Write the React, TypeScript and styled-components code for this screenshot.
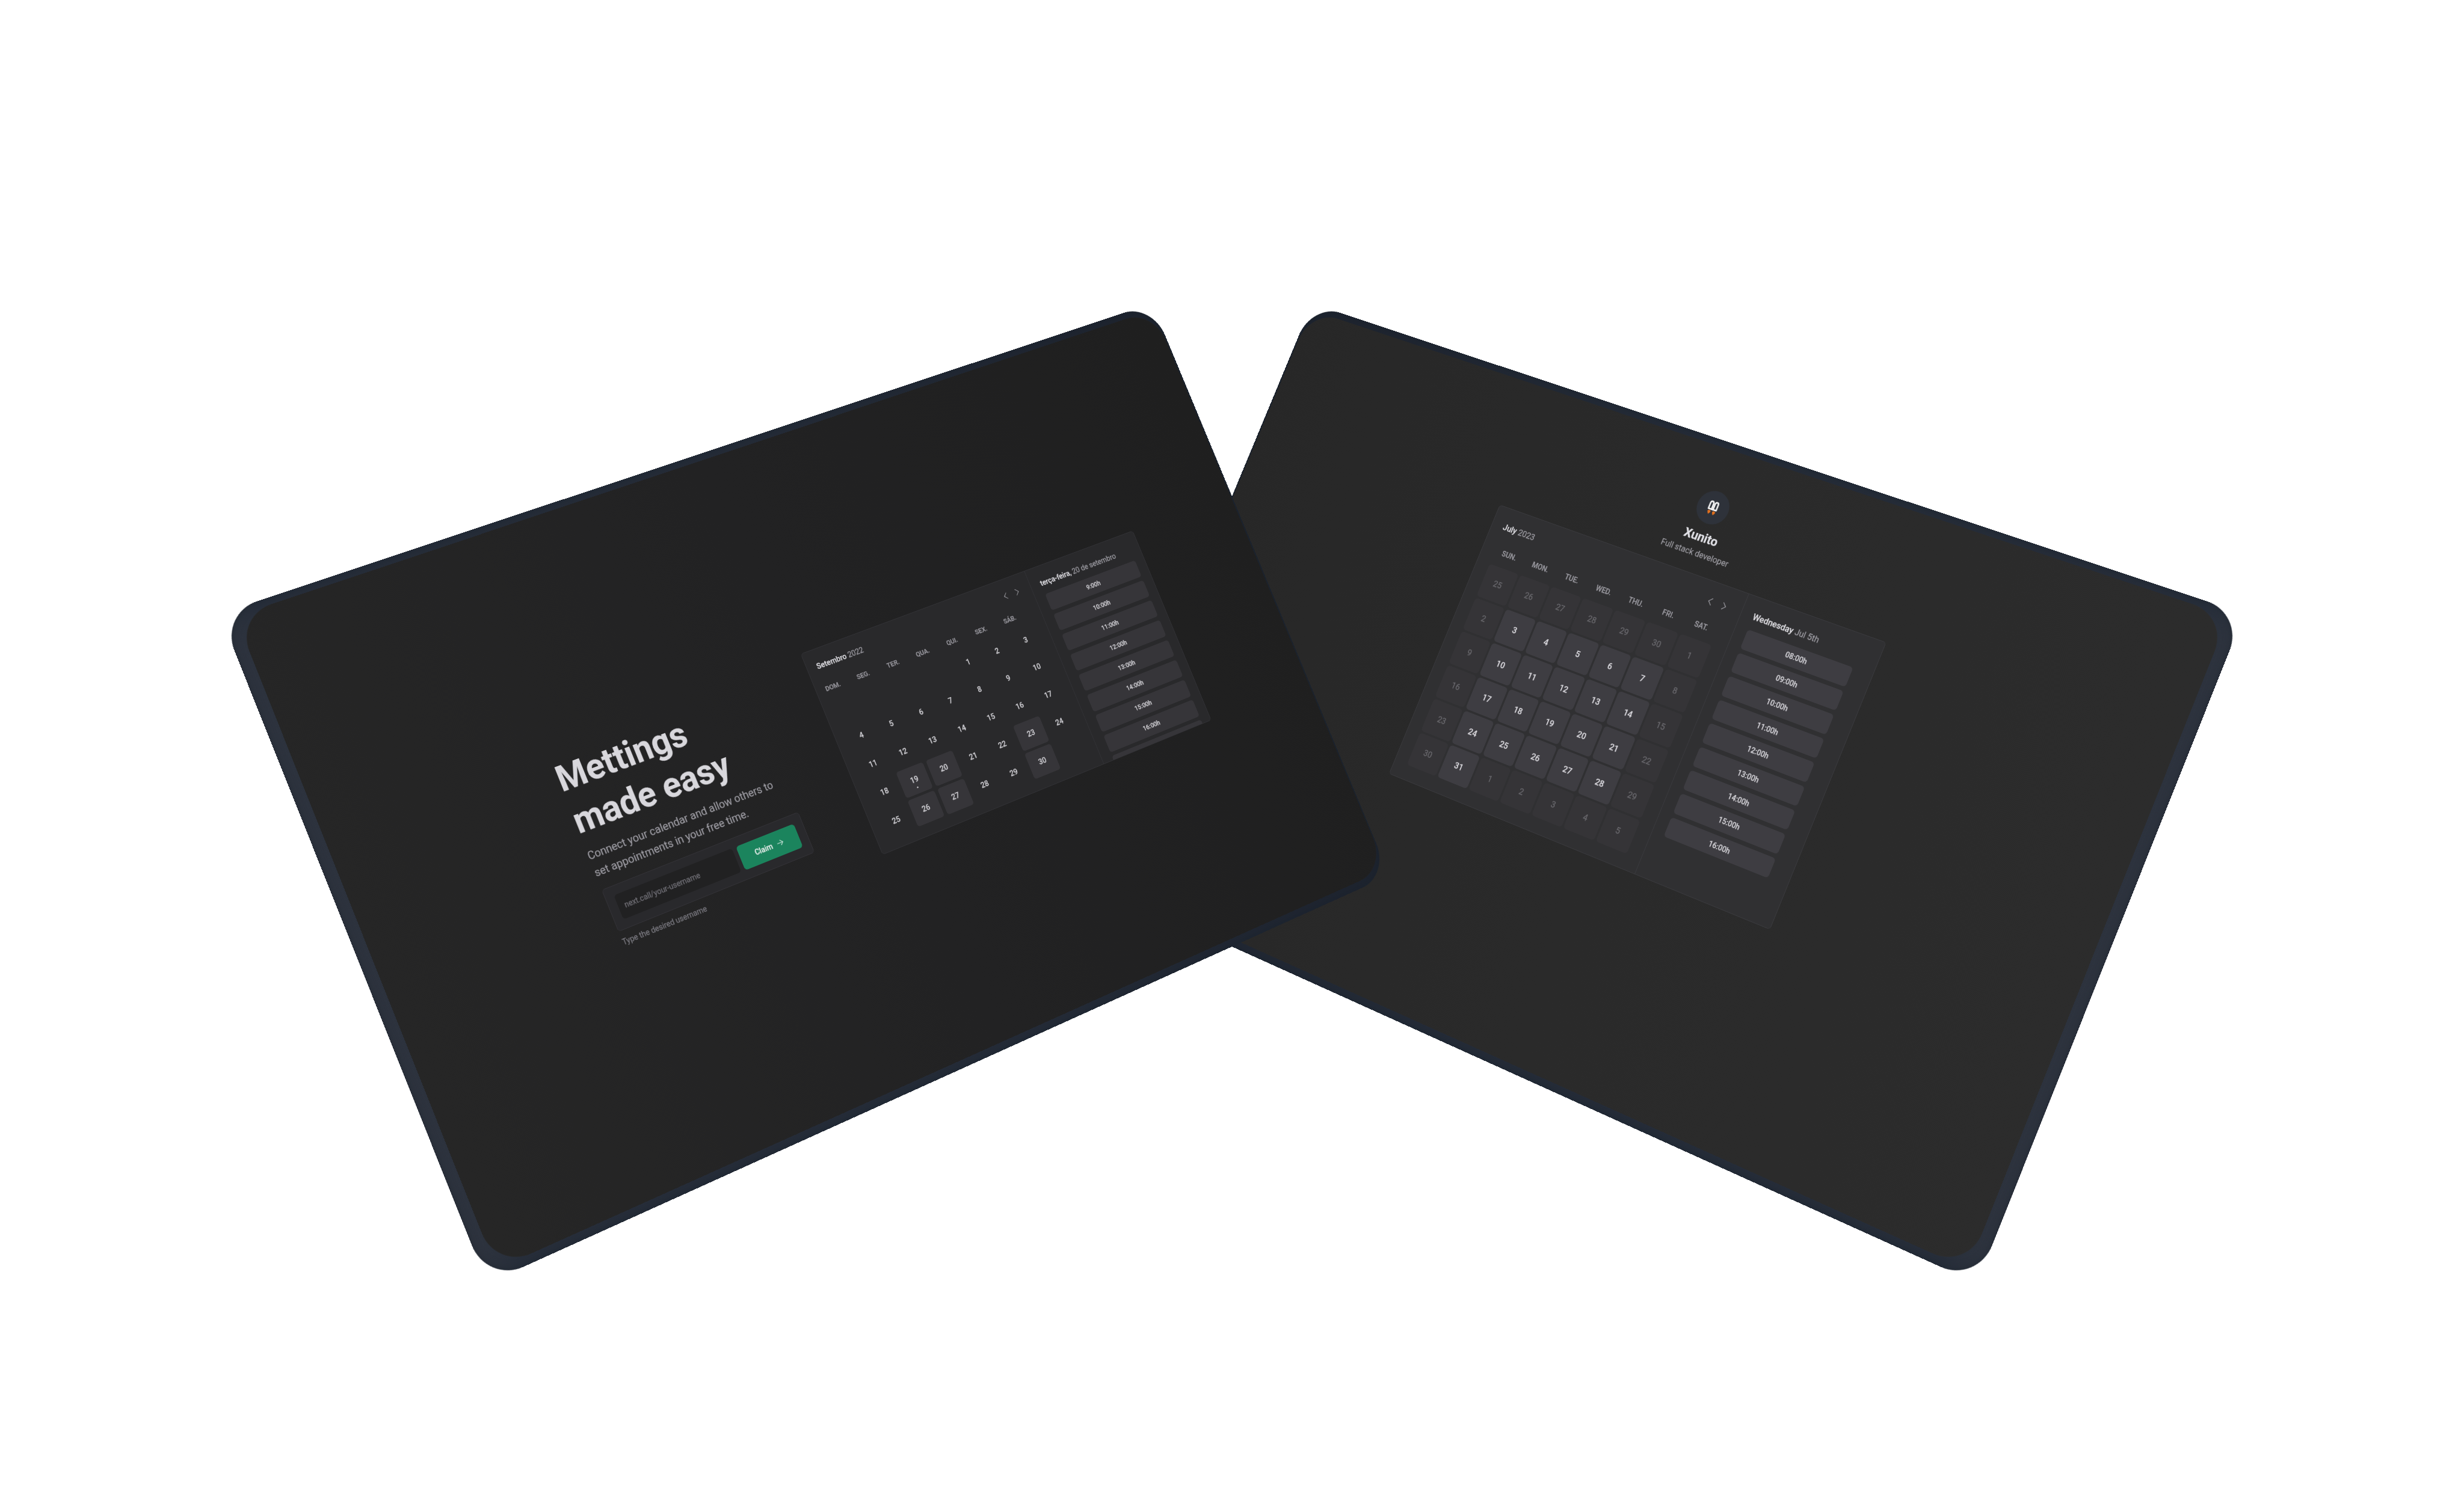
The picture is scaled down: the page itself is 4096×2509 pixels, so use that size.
import React from "react";
import styled, { createGlobalStyle, css } from "styled-components";

type Point = [number, number];

const ART_WIDTH = 5714;
const WINDOW_WIDTH = 4096;
const SCALE = WINDOW_WIDTH / ART_WIDTH;
const PAGE_W = 1926;
const PAGE_H = 1204;

function solveLinear(a: number[][], b: number[]): number[] {
  const n = b.length;
  const m = a.map((row, i) => [...row, b[i]]);
  for (let i = 0; i < n; i++) {
    let pivot = i;
    for (let j = i; j < n; j++) {
      if (Math.abs(m[j][i]) > Math.abs(m[pivot][i])) pivot = j;
    }
    const swap = m[i];
    m[i] = m[pivot];
    m[pivot] = swap;
    for (let j = 0; j < n; j++) {
      if (j === i) continue;
      const f = m[j][i] / m[i][i];
      for (let k = i; k <= n; k++) m[j][k] -= f * m[i][k];
    }
  }
  return m.map((row, i) => row[n] / row[i]);
}

/* Perspective transform that takes the flat page onto four corners: TL, TR, BR, BL. */
function projectPage(corners: Point[]): string {
  const flat: Point[] = [
    [0, 0],
    [PAGE_W, 0],
    [PAGE_W, PAGE_H],
    [0, PAGE_H],
  ];
  const a: number[][] = [];
  const b: number[] = [];
  flat.forEach(([x, y], i) => {
    const u = corners[i][0] * SCALE;
    const v = corners[i][1] * SCALE;
    a.push([x, y, 1, 0, 0, 0, -u * x, -u * y]);
    b.push(u);
    a.push([0, 0, 0, x, y, 1, -v * x, -v * y]);
    b.push(v);
  });
  const h = solveLinear(a, b);
  return `matrix3d(${[h[0], h[3], 0, h[6], h[1], h[4], 0, h[7], 0, 0, 1, 0, h[2], h[5], 0, 1]
    .map((n) => n.toFixed(12))
    .join(",")})`;
}

const flip = ([tl, tr, br, bl]: Point[]): Point[] =>
  [tr, tl, bl, br].map(([x, y]) => [ART_WIDTH - x, y] as Point);

const faceCorners: Point[] = [
  [545.8, 1429.2],
  [2673.8, 718.65],
  [3214.1, 2016.1],
  [1150.7, 2943.9],
];
const bodyCorners: Point[] = [
  [509.4, 1423.4],
  [2671.1, 703.9],
  [3222.5, 2030.5],
  [1129.4, 2976.5],
];

const GlobalStyle = createGlobalStyle`
  html, body { margin: 0; background: #ffffff; overflow: hidden; }
  *, *::before, *::after { box-sizing: border-box; }
`;

const Stage = styled.main`
  position: relative;
  width: 4096px;
  height: 2509px;
  overflow: hidden;
  background: #ffffff;
  font-family: Roboto, "Liberation Sans", sans-serif;
`;

const plane = css<{ $matrix: string }>`
  position: absolute;
  left: 0;
  top: 0;
  width: ${PAGE_W}px;
  height: ${PAGE_H}px;
  transform-origin: 0 0;
  transform: ${(p) => p.$matrix};
`;

const Body = styled.div<{ $matrix: string; $dir: string }>`
  ${plane}
  border-radius: 67px;
  background: linear-gradient(
    ${(p) => p.$dir},
    #2f343f 0%,
    #2c323d 1.2%,
    #272e3a 3.5%,
    #242b37 60%,
    #1d232e 100%
  );
  box-shadow: inset 0 0 14px rgba(24, 32, 42, 0.55);
`;

const Face = styled.section<{ $matrix: string; $from: string; $mid: string; $to: string }>`
  ${plane}
  border-radius: 65px;
  overflow: hidden;
  -webkit-text-stroke: 0.25px currentColor;
  background: linear-gradient(
    84deg,
    ${(p) => p.$from} 0%,
    ${(p) => p.$mid} 50%,
    ${(p) => p.$to} 100%
  );
`;

/* ---------- landing page ---------- */

const Landing = styled.div`
  display: flex;
  align-items: center;
  gap: 82px;
  height: 100%;
  padding-left: 382px;
`;

const Hero = styled.div`
  width: 480px;
  padding: 0 40px;
`;

const HeroTitle = styled.h1`
  margin: 0;
  font-size: 64px;
  line-height: 80px;
  font-weight: 700;
  color: #d8d7dc;
`;

const HeroText = styled.p`
  margin: 8px 0 0;
  font-size: 20px;
  line-height: 32px;
  color: #9b9aa1;
  white-space: nowrap;
`;

const ClaimForm = styled.div`
  display: grid;
  grid-template-columns: 1fr 120px;
  gap: 8px;
  margin-top: 16px;
  padding: 16px;
  border: 1px solid #333237;
  border-radius: 6px;
  background: #29292c;
`;

const UsernameField = styled.div`
  display: flex;
  align-items: center;
  height: 46px;
  padding: 0 12px;
  border-radius: 6px;
  background: #212122;
  font-size: 14px;
  color: #737279;
`;

const ClaimButton = styled.button`
  display: flex;
  align-items: center;
  justify-content: center;
  gap: 8px;
  height: 46px;
  padding: 0;
  border: 0;
  border-radius: 6px;
  background: #1b845d;
  color: #e4ece9;
  font: 500 14px Roboto, sans-serif;
  -webkit-text-stroke: 0.25px currentColor;
`;

const Hint = styled.p`
  margin: 9px 0 0;
  font-size: 14px;
  line-height: 22.4px;
  color: #7c7b82;
`;

/* ---------- shared calendar text ---------- */

const TitleRow = styled.div<{ $size: number; $line: number }>`
  display: flex;
  justify-content: space-between;
  align-items: center;
  height: ${(p) => p.$line}px;
  font-size: ${(p) => p.$size}px;
  white-space: nowrap;
  color: #a09fa6;

  strong {
    font-weight: 500;
    color: #dfdee3;
  }
`;

const Arrows = styled.div<{ $gap: number; $inset?: number }>`
  display: flex;
  gap: ${(p) => p.$gap}px;
  padding-right: ${(p) => p.$inset ?? 0}px;
`;

const WeekRow = styled.div<{ $col: number; $size: number }>`
  display: grid;
  grid-template-columns: repeat(7, ${(p) => p.$col}px);
  height: 20px;
  line-height: 20px;
  font-size: ${(p) => p.$size}px;
  font-weight: 500;
  text-align: center;
  color: #9b9aa1;
`;

/* ---------- preview calendar ---------- */

const Preview = styled.div`
  display: flex;
  flex: none;
  width: 746.5px;
  height: 401px;
  margin-bottom: 4px;
  overflow: hidden;
  border: 1px solid #323236;
  border-radius: 6px;
  background: #29292b;
`;

const PreviewMonth = styled.div`
  width: 492px;
  padding-top: 19.5px;
`;

const PreviewHead = styled.div`
  padding: 0 22px 0 19.5px;
`;

const PreviewWeek = styled.div`
  margin: 22px 0 0 2px;
`;

const PreviewGrid = styled.div`
  display: grid;
  grid-template-columns: repeat(7, 58.3px);
  grid-auto-rows: 52px;
  gap: 4.6px 6.5px;
  margin: 11.2px 0 0 21.3px;
`;

const PreviewDay = styled.div<{ $open?: boolean }>`
  position: relative;
  display: flex;
  align-items: center;
  justify-content: center;
  border-radius: 5px;
  background: ${(p) => (p.$open ? "#363539" : "transparent")};
  font-size: 14.5px;
  font-weight: 500;
  color: #cfced3;
`;

const TodayDot = styled.span`
  position: absolute;
  bottom: 10px;
  left: calc(50% - 1.5px);
  width: 3px;
  height: 3px;
  border-radius: 50%;
  background: #cfced3;
`;

const PreviewTimes = styled.div`
  flex: 1;
  padding: 20.5px 20px 0 21.5px;
  border-left: 1px solid #323236;
`;

const PreviewSlots = styled.div`
  display: flex;
  flex-direction: column;
  gap: 7.6px;
  margin-top: 8.6px;
`;

const PreviewSlot = styled.div`
  flex: none;
  height: 34.5px;
  border-radius: 5px;
  background: #363539;
  line-height: 34.5px;
  text-align: center;
  font-size: 12.7px;
  font-weight: 500;
  color: #cfced3;
`;

/* ---------- schedule page ---------- */

const Schedule = styled.div`
  display: flex;
  flex-direction: column;
  align-items: center;
  padding-top: 81px;
`;

const Avatar = styled.div`
  display: flex;
  align-items: center;
  justify-content: center;
  width: 64px;
  height: 64px;
  border-radius: 50%;
  background: #2e323a;
`;

const Name = styled.h2`
  margin: 8px 0 0;
  font-size: 24px;
  line-height: 38.4px;
  font-weight: 700;
  color: #e1e1e6;
`;

const Role = styled.p`
  margin: 0;
  font-size: 16px;
  line-height: 25.6px;
  color: #9c9ba1;
`;

const Board = styled.div`
  display: grid;
  grid-template-columns: 539px 279px;
  width: 820px;
  height: 556px;
  margin-top: 24px;
  border: 1px solid #3a3a3e;
  border-radius: 6px;
  background: #303032;
`;

const Month = styled.div`
  padding: 24px;
`;

const MonthWeek = styled.div`
  margin: 25.5px 0 0 0;
`;

const MonthGrid = styled.div`
  display: grid;
  grid-template-columns: repeat(7, 65.6px);
  grid-auto-rows: 65.6px;
  gap: 4px;
  margin: 17px 0 0 2.5px;
`;

const Day = styled.div<{ $off: boolean }>`
  display: flex;
  align-items: center;
  justify-content: center;
  border-radius: 6px;
  background: ${(p) => (p.$off ? "#353437" : "#3e3d42")};
  color: ${(p) => (p.$off ? "#6b6a6f" : "#dad9de")};
  font-size: 16px;
  font-weight: ${(p) => (p.$off ? 400 : 500)};
`;

const Times = styled.div`
  padding: 24px 39px 24px 24px;
  border-left: 1px solid #3a3a3e;
`;

const Slots = styled.div`
  display: flex;
  flex-direction: column;
  gap: 8px;
  margin-top: 12px;
`;

const Slot = styled.div`
  height: 38.4px;
  border-radius: 6px;
  background: #3e3d42;
  line-height: 38.4px;
  text-align: center;
  font-size: 14px;
  font-weight: 500;
  color: #d3d2d7;
`;

/* ---------- icons ---------- */

const Caret = ({ right, size }: { right?: boolean; size: number }) => (
  <svg width={size} height={size} viewBox="0 0 256 256" fill="none" stroke="#9c9ba2" strokeWidth={18} strokeLinecap="round" strokeLinejoin="round">
    <polyline points={right ? "96 48 176 128 96 208" : "160 208 80 128 160 48"} />
  </svg>
);

const ArrowRight = () => (
  <svg width={16} height={16} viewBox="0 0 256 256" fill="none" stroke="#c3e0d5" strokeWidth={20} strokeLinecap="round" strokeLinejoin="round">
    <line x1="40" y1="128" x2="216" y2="128" />
    <polyline points="144 56 216 128 144 200" />
  </svg>
);

const Rockets = () => (
  <svg width={20} height={27} viewBox="0 0 20 27">
    <g fill="none" stroke="#f4f4f4" strokeWidth={3} strokeLinejoin="round">
      <path d="M2 16.6 V5.6 Q2 1.8 5.2 1.8 Q8.4 1.8 8.4 5.6 V16.6 Z" />
      <path d="M11.6 16.6 V5.6 Q11.6 1.8 14.8 1.8 Q18 1.8 18 5.6 V16.6 Z" />
      <path d="M8 16.6 H12" />
    </g>
    <path d="M2.2 20 Q5.2 18 8.2 20 Q8.6 23.4 5.2 26.6 Q1.8 23.4 2.2 20 Z" fill="#e0701f" />
    <path d="M11.8 20 Q14.8 18 17.8 20 Q18.2 23.4 14.8 26.6 Q11.4 23.4 11.8 20 Z" fill="#e0701f" />
  </svg>
);

const previewWeek = ["DOM.", "SEG.", "TER.", "QUA.", "QUI.", "SEX.", "SÁB."];
const previewOpen = [19, 20, 23, 26, 27, 30];
const previewTimes = ["9:00h", "10:00h", "11:00h", "12:00h", "13:00h", "14:00h", "15:00h", "16:00h", ""];

const monthWeek = ["SUN.", "MON.", "TUE.", "WED.", "THU.", "FRI.", "SAT."];
const monthDays = Array.from({ length: 42 }, (_, i) => {
  const n = i - 5;
  const day = n < 1 ? n + 30 : n > 31 ? n - 31 : n;
  const weekday = i % 7;
  const off = n < 1 || n > 31 || weekday === 0 || weekday === 6;
  return { day, off };
});
const monthTimes = ["08:00h", "09:00h", "10:00h", "11:00h", "12:00h", "13:00h", "14:00h", "15:00h", "16:00h"];

const LandingPage = () => (
  <Landing>
    <Hero>
      <HeroTitle>
        Mettings
        <br />
        made easy
      </HeroTitle>
      <HeroText>
        Connect your calendar and allow others to
        <br />
        set appointments in your free time.
      </HeroText>
      <ClaimForm>
        <UsernameField>next.call/your-username</UsernameField>
        <ClaimButton>
          Claim <ArrowRight />
        </ClaimButton>
      </ClaimForm>
      <Hint>Type the desired username</Hint>
    </Hero>
    <Preview>
      <PreviewMonth>
        <PreviewHead>
          <TitleRow $size={14.5} $line={26}>
            <span>
              <strong>Setembro</strong> 2022
            </span>
            <Arrows $gap={7.3}>
              <Caret size={18} />
              <Caret size={18} right />
            </Arrows>
          </TitleRow>
        </PreviewHead>
        <PreviewWeek>
          <WeekRow $col={65} $size={12.7}>
            {previewWeek.map((d) => (
              <span key={d}>{d}</span>
            ))}
          </WeekRow>
        </PreviewWeek>
        <PreviewGrid>
          {Array.from({ length: 4 }, (_, i) => (
            <span key={`blank${i}`} />
          ))}
          {Array.from({ length: 30 }, (_, i) => i + 1).map((d) => (
            <PreviewDay key={d} $open={previewOpen.includes(d)}>
              {d}
              {d === 19 && <TodayDot />}
            </PreviewDay>
          ))}
        </PreviewGrid>
      </PreviewMonth>
      <PreviewTimes>
        <TitleRow $size={14.5} $line={26}>
          <span>
            <strong>terça-feira,</strong> 20 de setembro
          </span>
        </TitleRow>
        <PreviewSlots>
          {previewTimes.map((t) => (
            <PreviewSlot key={t}>{t}</PreviewSlot>
          ))}
        </PreviewSlots>
      </PreviewTimes>
    </Preview>
  </Landing>
);

const SchedulePage = () => (
  <Schedule>
    <Avatar>
      <Rockets />
    </Avatar>
    <Name>Xunito</Name>
    <Role>Full stack developer</Role>
    <Board>
      <Month>
        <TitleRow $size={16} $line={25.6}>
          <span>
            <strong>July</strong> 2023
          </span>
          <Arrows $gap={8} $inset={2}>
            <Caret size={20} />
            <Caret size={20} right />
          </Arrows>
        </TitleRow>
        <MonthWeek>
          <WeekRow $col={69.6} $size={14}>
            {monthWeek.map((d) => (
              <span key={d}>{d}</span>
            ))}
          </WeekRow>
        </MonthWeek>
        <MonthGrid>
          {monthDays.map(({ day, off }, i) => (
            <Day key={i} $off={off}>
              {day}
            </Day>
          ))}
        </MonthGrid>
      </Month>
      <Times>
        <TitleRow $size={16} $line={25.6}>
          <span>
            <strong>Wednesday</strong> Jul 5th
          </span>
        </TitleRow>
        <Slots>
          {monthTimes.map((t) => (
            <Slot key={t}>{t}</Slot>
          ))}
        </Slots>
      </Times>
    </Board>
  </Schedule>
);

export default function App() {
  return (
    <>
      <GlobalStyle />
      <Stage>
        <Body $matrix={projectPage(flip(bodyCorners))} $dir="270deg" />
        <Face $matrix={projectPage(flip(faceCorners))} $from="#272727" $mid="#2a2a2a" $to="#2c2c2c">
          <SchedulePage />
        </Face>
        <Body $matrix={projectPage(bodyCorners)} $dir="90deg" />
        <Face $matrix={projectPage(faceCorners)} $from="#262626" $mid="#222223" $to="#1f1f1f">
          <LandingPage />
        </Face>
      </Stage>
    </>
  );
}
